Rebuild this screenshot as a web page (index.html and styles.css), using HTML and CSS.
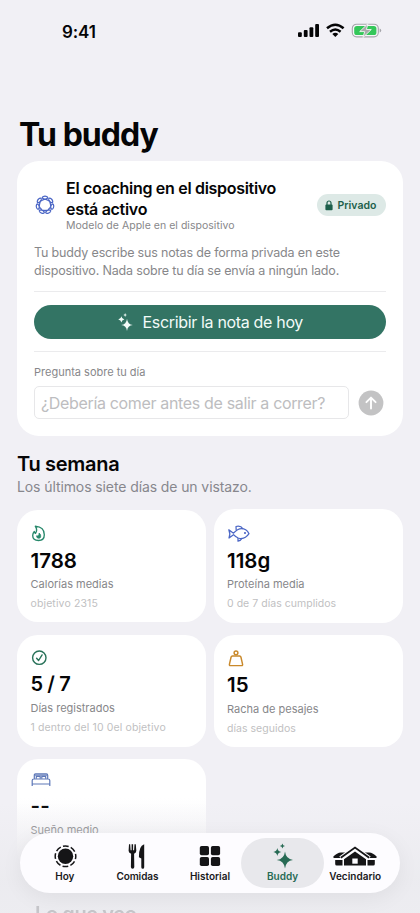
FILE: index.html
```html
<!DOCTYPE html>
<html lang="es">
<head>
<meta charset="utf-8">
<meta name="viewport" content="width=device-width, initial-scale=1">
<title>Tu buddy</title>
<link rel="stylesheet" href="styles.css">
</head>
<body>
<div class="screen">
  <header class="status">
    <span class="time">9:41</span>
    <svg class="status-icons" viewBox="0 0 84 16" width="84" height="16">
      <g fill="#050506"><rect x="0" y="9.3" width="3.8" height="4.8" rx="1"/><rect x="5.8" y="7" width="3.8" height="7.1" rx="1"/><rect x="11.5" y="4.2" width="3.8" height="9.9" rx="1"/><rect x="17.2" y="1" width="3.8" height="13.1" rx="1"/></g>
      <g fill="none" stroke="#050506" stroke-width="2.5"><path d="M29 5.3Q37.3-1.8 45.600 5.300"/><path d="M32 8.700Q37.300 4.200 42.600 8.700"/></g>
      <path d="M34.300 11Q37.300 8.600 40.300 11L37.300 14.100Z" fill="#050506"/>
      <rect x="54.300" y="1.200" width="26" height="12.700" rx="4.300" fill="#f6f6f8" stroke="#a5a5aa" stroke-width="1.100"/>
      <rect x="56.200" y="3" width="22.200" height="9.100" rx="2.600" fill="#34c759"/>
      <path d="M81.700 5.500v4q1.500-.6 1.500-2t-1.500-2z" fill="#a5a5aa"/>
      <path d="M70 .6L61.700 8.600h5L64.900 14.600L73.300 6.500H68.400Z" fill="#a7aaa9" stroke="#f3f5f4" stroke-width=".9"/>
    </svg>
  </header>
  <main>
    <h1>Tu buddy</h1>
    <section class="coach">
      <div class="coach-head">
        <svg class="atom" viewBox="0 0 20 20" width="20" height="20" fill="none" stroke="#4b66c5" stroke-width="1.25"><path id="petals" d=""/></svg>
        <div class="coach-title"><h2>El coaching en el dispositivo<br>está activo</h2><p>Modelo de Apple en el dispositivo</p></div>
        <span class="badge"><svg viewBox="0 0 8 11" width="8" height="11"><path d="M2 5V3a2 2 0 0 1 4 0v2" fill="none" stroke="#1c5f4b" stroke-width="1.200"/><rect x=".4" y="4.500" width="7.200" height="5.700" rx="1" fill="#1c5f4b"/></svg>Privado</span>
      </div>
      <p class="body">Tu buddy escribe sus notas de forma privada en este<br>dispositivo. Nada sobre tu día se envía a ningún lado.</p>
      <hr>
      <button class="write"><svg viewBox="0 0 20 24" width="15" height="18" fill="currentColor"><path d="M12 7.500Q12.800 15.200 19.800 16Q12.800 16.800 12 24Q11.200 16.800 4.200 16Q11.200 15.200 12 7.500Z"/><path d="M4.500 4.300Q5 8 8.500 8.500Q5 9 4.500 12.700Q4 9 .3 8.500Q4 8 4.500 4.300ZM9.500 0Q9.800 2.400 12 2.700Q9.800 3 9.500 5.400Q9.200 3 7 2.700Q9.200 2.400 9.500 0Z"/></svg><span>Escribir la nota de hoy</span></button>
      <hr>
      <p class="ask-label">Pregunta sobre tu día</p>
      <div class="ask"><div class="field"><span>¿Debería comer antes de salir a correr?</span></div><svg viewBox="0 0 26 26" width="26" height="26"><circle cx="13" cy="13" r="12.400" fill="#c3c3c4"/><path d="M13 18.500V7.700M8.400 12.200L13 7.600l4.600 4.600" fill="none" stroke="#fff" stroke-width="1.900" stroke-linecap="round" stroke-linejoin="round"/></svg></div>
    </section>
    <h2 class="week">Tu semana</h2>
    <p class="week-sub">Los últimos siete días de un vistazo.</p>
    <section class="stats">
      <article>
        <svg viewBox="0 0 16 18" width="16" height="18" fill="none" stroke="#27886b" stroke-width="1.350" stroke-linejoin="round"><path d="M4.300 1.200Q13.300 2 13.300 9.700Q13.300 15.500 7.500 15.500Q1.700 15.500 1.700 10.500Q1.700 8.300 3.300 6.500Q3.400 8 4.500 8.400Q6.800 5 4.300 1.200Z"/><path d="M8.100 8Q10.300 9.500 9.700 12Q9.300 13.300 7.700 13.300Q5.500 13.300 5.500 10.800L7 11Q8.200 10 8.100 8Z" fill="#27886b" stroke-width=".7"/></svg>
        <strong>1788</strong><span>Calorías medias</span><small>objetivo 2315</small>
      </article>
      <article class="tall">
        <svg viewBox="0 0 24 18" width="24" height="18" fill="none" stroke="#4b66c5" stroke-width="1.250" stroke-linejoin="round"><path d="M6.500 8.200Q12.500 1.500 18.700 4.700Q20.800 6 22 8.700Q17.600 15.200 11.200 13Q8.500 12 6.500 9.700L2 13Q3.700 9 1.800 4.800Z"/><path d="M9.200 5L9 1.500Q13.700.3 16 3.900M11 13v3.200q3-.6 4.200-3.100"/><circle cx="18" cy="8" r=".45" fill="#4b66c5"/></svg>
        <strong>118g</strong><span>Proteína media</span><small class="tight">0 de 7 días cumplidos</small>
      </article>
      <article class="logged">
        <svg viewBox="0 0 16 18" width="16" height="18" fill="none" stroke="#287259" stroke-width="1.400" stroke-linecap="round" stroke-linejoin="round"><circle cx="8.300" cy="8.700" r="6.700"/><path d="M5.600 9.200l2 2.300 3.500-5.600"/></svg>
        <strong class="ratio">5 / 7</strong><span>Días registrados</span><small>1 dentro del 10 0el objetivo</small>
      </article>
      <article>
        <svg class="weight" viewBox="0 0 18 18" width="18" height="18" fill="none" stroke="#c9892b" stroke-width="1.450" stroke-linejoin="round"><circle cx="9" cy="2.800" r="1.900"/><path d="M5.400 6h7.200q1 0 1.300 1l1.700 7.300q.2 1.300-1 1.300H3.400q-1.200 0-1-1.300l1.700-7.300q.3-1 1.300-1Z"/></svg>
        <strong>15</strong><span>Racha de pesajes</span><small class="tight">días seguidos</small>
      </article>
      <article class="sleep">
        <svg viewBox="0 0 20 18" width="20" height="18" fill="none" stroke="#5e78b8" stroke-width="1.200" stroke-linejoin="round"><path d="M3.300 8V4.200Q3.300 2.900 4.600 2.900h10.800q1.300 0 1.300 1.300V8M1.200 15V9.600Q1.200 8 2.900 8h14.200q1.700 0 1.700 1.600V15M1.200 13h17.600"/><path d="M5.300 7.700V5.300h3.900v2.400M10.800 7.700V5.300h3.900v2.400"/><path d="M3.500 4.100h13"/></svg>
        <strong class="dash">--</strong><span>Sueño medio</span>
      </article>
    </section>
  </main>
  <div class="fade"><span>Lo que veo</span></div>
  <nav>
    <a><svg viewBox="0 0 24 26" width="24" height="26"><circle cx="12.500" cy="13.300" r="7.700" fill="#151517"/><circle cx="12.500" cy="13.300" r="10.300" fill="none" stroke="#151517" stroke-width="1.500" stroke-dasharray="5.790 2.300" stroke-dashoffset="2.900"/></svg><span>Hoy</span></a>
    <a><svg viewBox="0 0 20 26" width="20" height="26" fill="#151517"><path d="M2 1.200h1.200l.4 6h1V1.200h1.500v6h1l.4-6h1.300l.5 6.500q.1 2.200-2.200 3.100l.2 13.300q0 1.700-1.700 1.700t-1.700-1.700l.2-13.300Q1.500 9.900 1.600 7.700ZM17.200 1.200V24.200q0 1.600-1.400 1.600T14.300 24.200V15.500L11.900 14.300Q11.600 3 17.200 1.200Z"/></svg><span class="meals">Comidas</span></a>
    <a><svg viewBox="0 0 22 26" width="22" height="26" fill="#151517"><rect x=".8" y="3" width="9.200" height="9.200" rx="1.800"/><rect x="11.900" y="3" width="9.200" height="9.200" rx="1.800"/><rect x=".8" y="13.900" width="9.200" height="9.200" rx="1.800"/><rect x="11.900" y="13.900" width="9.200" height="9.200" rx="1.800"/></svg><span>Historial</span></a>
    <a class="active"><svg viewBox="0 0 20 26" width="20" height="26" fill="#276a54"><path d="M12 8.500Q12.900 16.200 20.300 17Q12.900 17.800 12 25.500Q11.100 17.800 3.700 17Q11.100 16.200 12 8.500Z"/><path d="M4.300 5Q4.800 8.500 8.300 9Q4.800 9.500 4.300 13Q3.800 9.500.3 9Q3.800 8.500 4.300 5ZM9.400.5Q9.700 2.700 12 3Q9.700 3.300 9.400 5.500Q9.100 3.300 6.800 3Q9.100 2.700 9.400.5Z"/></svg><span>Buddy</span></a>
    <a><svg viewBox="0 0 44 26" width="44" height="26"><g fill="#151517"><path d="M0 14Q4 9.700 8 9.500h6.500L7.500 15H1ZM44 14Q40 9.700 36 9.500h-6.500L36.500 15H43ZM2.200 17h7.300v5.500H3.700q-1.500 0-1.500-1.500ZM41.800 17h-7.300v5.500h5.800q1.500 0 1.500-1.500Z"/><path d="M11 16.300L22 8.500l11 7.800v6.200H11Z"/></g><path d="M7.500 15L22 4.500l14.500 10.500" fill="none" stroke="#fdfcff" stroke-width="4"/><path d="M7.800 14.700L22 4.500l14.200 10.200" fill="none" stroke="#151517" stroke-width="1.800"/><path d="M19.300 15.500h5.400v5.200h-5.400z" fill="#fdfcff"/></svg><span>Vecindario</span></a>
  </nav>
</div>
<script src="icons.js"></script>
</body>
</html>
```
FILE: icons.js
```js
// Seven-looped rosette: radius and angle both oscillate so that each lobe crosses itself.
const steps = 420;
let d = "";
for (let i = 0; i <= steps; i++) {
  const t = (i / steps) * Math.PI * 2;
  const radius = 7.15 + 1.65 * Math.cos(7 * t);
  const angle = t - 0.56 * Math.sin(7 * t) - Math.PI / 2;
  const x = 10 + radius * Math.cos(angle);
  const y = 10 + radius * Math.sin(angle);
  d += (i ? "L" : "M") + x.toFixed(2) + " " + y.toFixed(2);
}
document.getElementById("petals").setAttribute("d", d + "Z");
```
FILE: styles.css
```css
* { box-sizing: border-box; margin: 0; padding: 0; }
body { background: #f1f0f5; font-family: Inter, "Liberation Sans", sans-serif; color: #050506; }
.screen { width: 420px; height: 913px; overflow: hidden; position: relative; white-space: nowrap; }
.status { height: 114px; padding: 23px 38px 0 62px; display: flex; justify-content: space-between; align-items: flex-start; }
.time { font-size: 17px; line-height: 18px; font-weight: 580; letter-spacing: -0.1px; }
main { padding: 0 17px; }
h1 { font-size: 32px; line-height: 41px; font-weight: 700; letter-spacing: -0.95px; padding-left: 2px; }
.coach { margin: 6px 0 0; width: 386px; height: 275px; background: #fff; border-radius: 22px; padding: 16px 17px; }
.coach-head { display: flex; align-items: center; height: 56px; }
.atom { margin: 0 11px 0 1px; }
.coach-title { flex: 1; }
.coach-title h2 { font-size: 16px; line-height: 21px; font-weight: 600; letter-spacing: -0.3px; }
.coach-title p { font-size: 10.5px; line-height: 12px; color: #87878a; letter-spacing: 0.03px; }
.badge { display: flex; align-items: center; justify-content: center; gap: 5px; width: 69px; height: 22px; border-radius: 11px; background: #dde9e6; color: #1c5f4b; font-size: 10.500px; font-weight: 600; padding-right: 2px; }
.body { margin-top: 11px; font-size: 12.5px; line-height: 17.500px; letter-spacing: -0.165px; color: #87878a; }
hr { border: 0; height: 1px; background: #ebebed; }
.body + hr { margin-top: 12px; }
.write { width: 351.500px; height: 34px; margin: 12.500px 0 12.500px; border: 0; border-radius: 17px; background: #337464; color: #f2fbf8; font: 400 16px Inter, sans-serif; display: flex; align-items: center; justify-content: center; gap: 9px; letter-spacing: -0.33px; padding-left: 2px; }
.ask-label { margin-top: 13px; font-size: 11px; line-height: 14px; color: #87878a; }
.ask { display: flex; align-items: center; gap: 9px; margin-top: 7px; }
.field { width: 315px; height: 33px; border: 1px solid #e7e7e9; border-radius: 5px; padding-left: 6px; line-height: 32px; font-size: 16px; letter-spacing: -0.34px; color: #bdbdc0; }
.week { margin-top: 16px; font-size: 20px; line-height: 25px; font-weight: 600; letter-spacing: -0.3px; }
.week-sub { font-size: 14px; line-height: 20px; color: #87878d; letter-spacing: -0.1px; }
.stats { display: grid; grid-template-columns: 189px 189px; column-gap: 8px; grid-template-rows: 112px 112px 112px; row-gap: 12.500px; margin-top: 13px; align-items: center; }
article { height: 112px; background: #fff; border-radius: 21px; padding: 15px 13px 0 13.500px; display: flex; flex-direction: column; align-items: flex-start; }
article:nth-child(even) { padding-left: 13px; }
article.tall { height: 114px; padding-top: 16px; }
article.logged { padding-top: 14px; }
article strong { font-size: 20.500px; line-height: 24px; font-weight: 600; margin-top: 5.500px; }
article .ratio { font-size: 20px; letter-spacing: -0.4px; }
article span { font-size: 11px; line-height: 14px; color: #87878a; margin-top: 4.500px; }
article small { font-size: 10.500px; line-height: 13px; color: #bfbfc2; margin-top: 6px; letter-spacing: 0.12px; }
article .tight { letter-spacing: 0.03px; }
article.sleep { padding-top: 12px; background: linear-gradient(#fff 35%, #f3f2f6 85%); }
article .dash { letter-spacing: 0.3px; line-height: 20px; margin-top: 7px; }
article .dash + span { margin-top: 7px; }
.weight { margin-left: -0.5px; }
.fade { position: absolute; left: 0; top: 803px; width: 420px; height: 110px; background: linear-gradient(transparent, #e9e9edaa 70%, #ebebefbb); padding: 99px 0 0 35px; }
.fade span { font-size: 20px; line-height: 24px; font-weight: 600; letter-spacing: -0.4px; color: #c6c6ca; filter: blur(0.5px); }
nav { position: absolute; left: 20px; top: 833px; width: 380px; height: 60px; border-radius: 30px; background: #fdfcff; box-shadow: 0 5px 22px #0000000f; display: flex; align-items: center; justify-content: center; padding: 0 3px; }
nav a { width: 72.600px; height: 50px; display: flex; flex-direction: column; align-items: center; padding-top: 5px; color: #19191b; font-size: 10px; line-height: 13px; font-weight: 580; border-radius: 25px; }
nav a span { margin-top: 1px; }
nav .meals { letter-spacing: -0.1px; }
nav .active { width: 83px; margin: 0 -5.200px; background: #e8e8ec; color: #276a54; font-weight: 600; }
```
